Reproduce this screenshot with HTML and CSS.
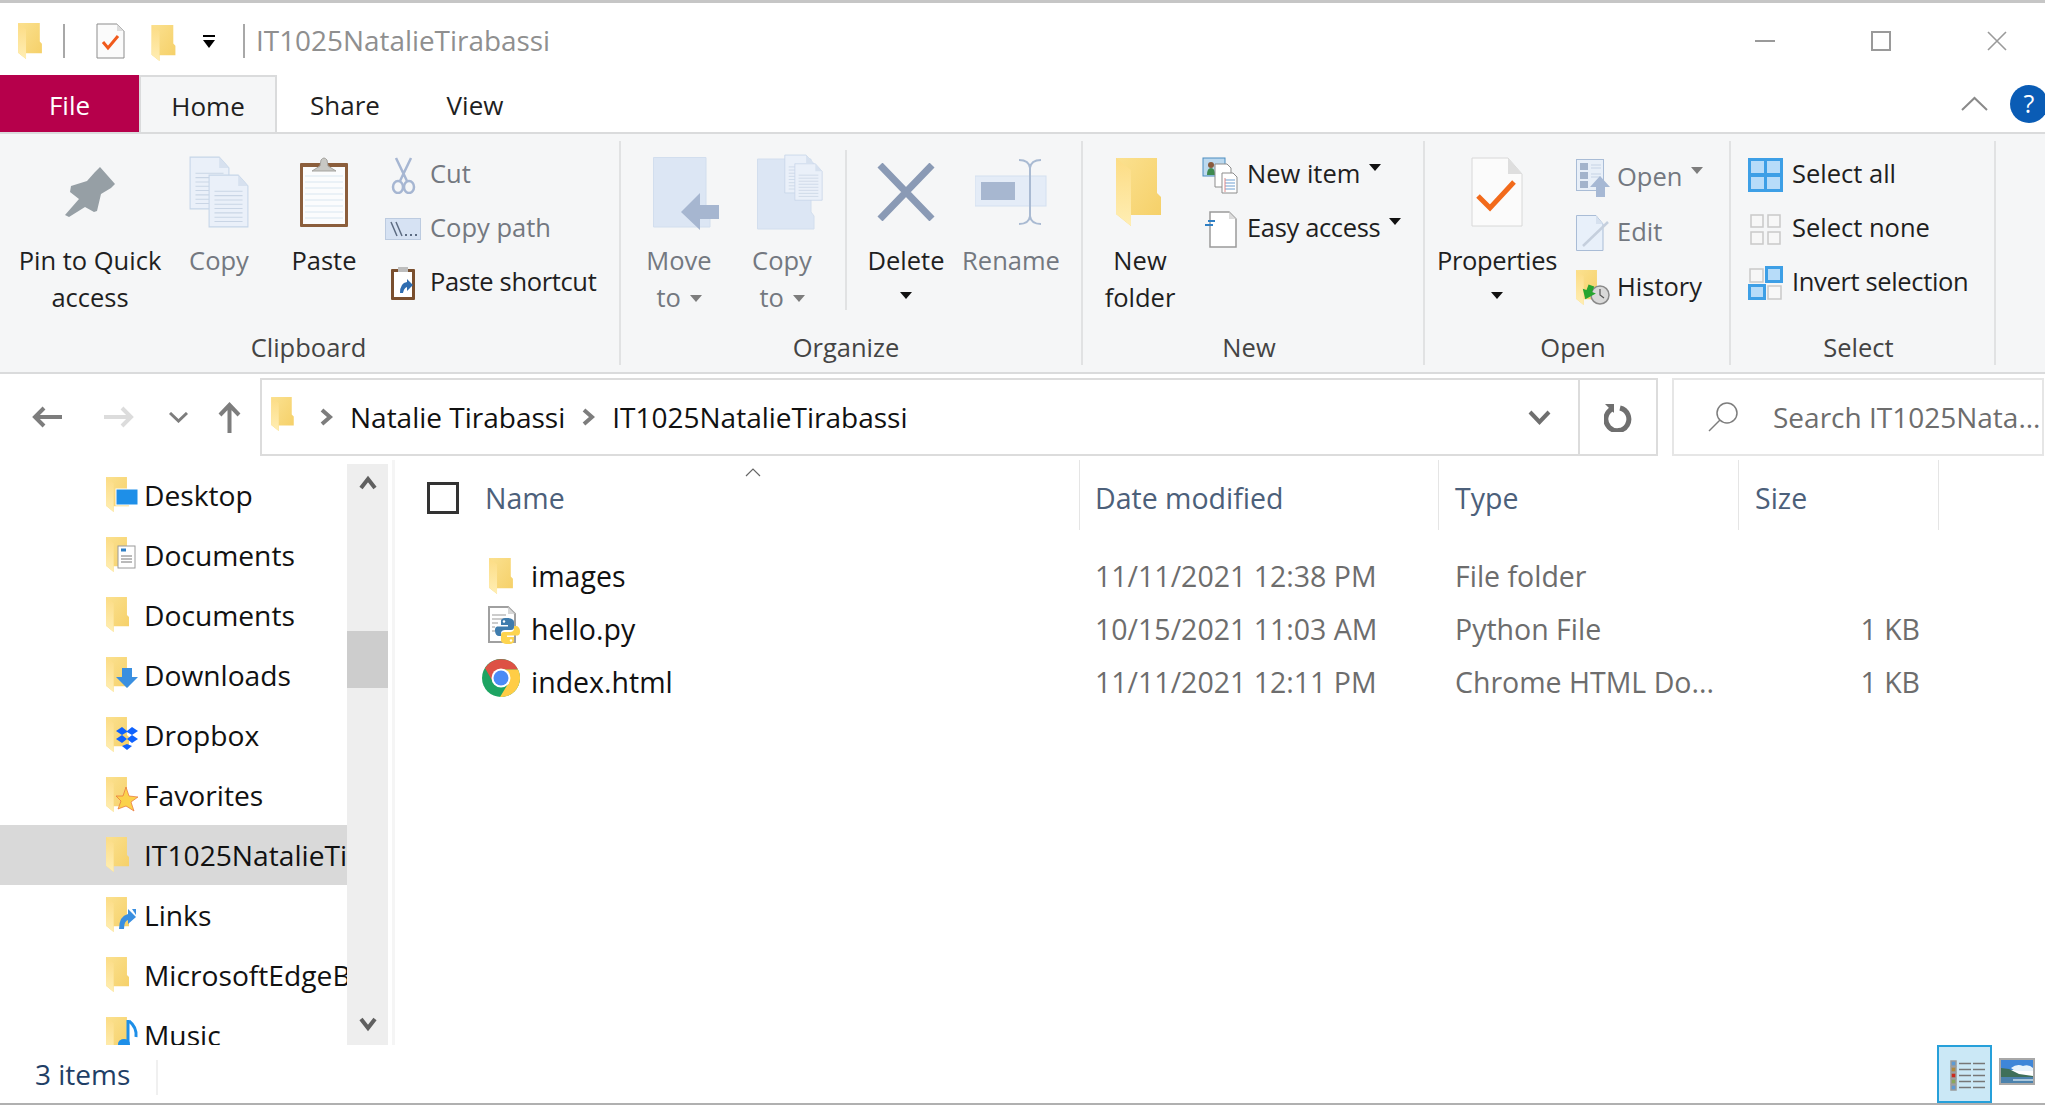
FILE: index.html
```html
<!DOCTYPE html>
<html lang="en">
<head>
  <meta charset="UTF-8">
  <meta name="viewport" content="width=device-width, initial-scale=1.0">
  <title>IT1025NatalieTirabassi</title>
  <link rel="stylesheet" href="styles.css">
</head>
<body>
  <!-- shared icon shapes -->
  <svg class="sprite" xmlns="http://www.w3.org/2000/svg">
    <defs>
      <linearGradient id="folderBack" x1="0" y1="0" x2="1" y2="1">
        <stop offset="0" stop-color="#fbe190"/>
        <stop offset="1" stop-color="#f5cf66"/>
      </linearGradient>
      <linearGradient id="folderFront" x1="0" y1="0" x2="0" y2="1">
        <stop offset="0" stop-color="#fcdc84"/>
        <stop offset="1" stop-color="#ffeeb4"/>
      </linearGradient>
      <symbol id="folder" viewBox="0 0 45 68">
        <path d="M0 0H41V35L45 39V57H15V68L0 56Z" fill="url(#folderBack)"/>
        <path d="M0 0L15 12V68L0 56Z" fill="url(#folderFront)"/>
      </symbol>
      <symbol id="page" viewBox="0 0 38 50">
        <path d="M1 1H28L37 11V49H1Z" fill="#eaf0f9" stroke="#c6d5e8"/>
        <path d="M28 1V11H37Z" fill="#d7e1ef"/>
        <path d="M6 16H32M6 20H32M6 24H32M6 28H32M6 32H32M6 36H32M6 40H32M6 44H32" stroke="#c9d5e5"/>
      </symbol>
    </defs>
  </svg>

  <!-- title bar -->
  <header class="titlebar">
    <svg class="qa-folder" width="24" height="36"><use href="#folder"/></svg>
    <span class="qa-sep"></span>
    <svg class="qa-check" width="29" height="36" viewBox="0 0 29 36">
      <path d="M1 1H21L28 8V35H1Z" fill="#fbfbfb" stroke="#8d8d8d"/>
      <path d="M21 1V8H28Z" fill="#dcdcdc"/>
      <path d="M7 19L12 25L22 13" fill="none" stroke="#f05a1c" stroke-width="3"/>
    </svg>
    <svg class="qa-folder2" width="25" height="36"><use href="#folder"/></svg>
    <svg class="qa-drop" width="14" height="14" viewBox="0 0 14 14">
      <path d="M1 0H13V2H1ZM1 5H13L7 13Z" fill="#000"/>
    </svg>
    <span class="qa-sep qa-sep-last"></span>
    <span class="window-title">IT1025NatalieTirabassi</span>
    <div class="window-controls">
      <svg width="20" height="20" viewBox="0 0 20 20"><path d="M0 10H20" stroke="#9a9a9a" stroke-width="2"/></svg>
      <svg width="20" height="20" viewBox="0 0 20 20"><path d="M1 1H19V19H1Z" fill="none" stroke="#9a9a9a" stroke-width="2"/></svg>
      <svg width="20" height="20" viewBox="0 0 20 20"><path d="M1 1L19 19M19 1L1 19" stroke="#9a9a9a" stroke-width="1.6"/></svg>
    </div>
  </header>

  <!-- ribbon tabs -->
  <nav class="tabs">
    <div class="tab tab-file">File</div>
    <div class="tab tab-home">Home</div>
    <div class="tab tab-share">Share</div>
    <div class="tab tab-view">View</div>
    <svg class="tabs-chevron" width="27" height="15" viewBox="0 0 27 15"><path d="M1 14L13.500 2L26 14" fill="none" stroke="#8a8a8a" stroke-width="2"/></svg>
    <div class="help">?</div>
  </nav>

  <!-- ribbon -->
  <section class="ribbon">
    <div class="group group-clipboard">
      <div class="group-body">
        <div class="big big-pin">
          <div class="big-icon">
            <svg width="50" height="50" viewBox="0 0 50 50"><path d="M35 0L50 17L46 21L36 27L32 44L29 45L20 40L4 50L0 48L14 32L5 25L6 19L22 14L30 5Z" fill="#969fa5"/></svg>
          </div>
          <span>Pin to Quick</span><span>access</span>
        </div>
        <div class="big big-copy off">
          <div class="big-icon">
            <svg width="60" height="72" viewBox="0 0 60 72">
              <use href="#page" x="0" y="0" width="41" height="54"/>
              <use href="#page" x="19" y="18" width="41" height="54"/>
            </svg>
          </div>
          <span>Copy</span>
        </div>
        <div class="big big-paste">
          <div class="big-icon">
            <svg width="50" height="72" viewBox="0 0 50 72">
              <rect x="1" y="7" width="48" height="64" rx="1" fill="#8b5e3c"/>
              <rect x="4" y="11" width="42" height="57" fill="#fbfcfd"/>
              <path d="M6 20H44M6 26H44M6 32H44M6 38H44M6 44H44M6 50H44M6 56H44M6 62H44" stroke="#d9e6f0"/>
              <path d="M13 15L21 10L22 4Q25 0 28 4L29 10L37 15Z" fill="#c8c8c4" stroke="#a5a39f"/>
            </svg>
          </div>
          <span>Paste</span>
        </div>
        <div class="smalls">
          <div class="small off">
            <div class="small-icon">
              <svg width="25" height="37" viewBox="0 0 25 37" fill="none" stroke="#a6b6d2" stroke-width="2.500">
                <path d="M5 1L16 24M20 1L9 24"/>
                <ellipse cx="7" cy="30" rx="5" ry="6"/><ellipse cx="18" cy="30" rx="5" ry="6"/>
              </svg>
            </div>
            <span>Cut</span>
          </div>
          <div class="small off">
            <div class="small-icon">
              <svg width="36" height="22" viewBox="0 0 36 22">
                <rect x=".5" y=".5" width="35" height="21" fill="#d6e2f3" stroke="#bccbe0"/>
                <path d="M6 4L12 18M11 4L17 18" stroke="#5d6c82" stroke-width="1.500"/>
                <path d="M20 17H22M25 17H27M30 17H32" stroke="#5d6c82" stroke-width="2"/>
              </svg>
            </div>
            <span>Copy path</span>
          </div>
          <div class="small">
            <div class="small-icon">
              <svg width="26" height="36" viewBox="0 0 26 36">
                <rect x="1" y="4" width="24" height="31" rx="1" fill="#7a4f2e"/>
                <rect x="4" y="7" width="18" height="25" fill="#fff"/>
                <path d="M8 2H18V7H8Z" fill="#bdbdbd"/>
                <path d="M10 28Q10 18 17 17V14L23 20L17 26V22Q14 23 13 28Z" fill="#2e6cb0"/>
              </svg>
            </div>
            <span class="tight">Paste shortcut</span>
          </div>
        </div>
      </div>
      <div class="group-label">Clipboard</div>
    </div>

    <div class="group group-organize">
      <div class="group-body">
        <div class="big big-move off">
          <div class="big-icon">
            <svg class="icon-right" width="68" height="76" viewBox="0 0 68 76">
              <path d="M.5 .5H53V57L57 61V70H.5Z" fill="#dce6f4" stroke="#d2deee"/>
              <path d="M28 55L47 36V48H66V62H47V73Z" fill="#a6b6d0"/>
            </svg>
          </div>
          <span>Move</span><span>to <i class="caret caret-off"></i></span>
        </div>
        <div class="big big-copyto off">
          <div class="big-icon">
            <svg class="icon-right" width="66" height="76" viewBox="0 0 66 76">
              <path d="M.5 5H54V58L57 62V75H.5Z" fill="#dce6f4" stroke="#d2deee"/>
              <use href="#page" x="27" y="0" width="30" height="40"/>
              <use href="#page" x="37" y="9" width="29" height="38"/>
            </svg>
          </div>
          <span>Copy</span><span>to <i class="caret caret-off"></i></span>
        </div>
        <span class="group-sep"></span>
        <div class="big big-delete">
          <div class="big-icon">
            <svg width="58" height="58" viewBox="0 0 58 58"><path d="M3 2L55 56M55 2L3 56" stroke="#8a9ab5" stroke-width="7"/></svg>
          </div>
          <span>Delete</span><i class="caret caret-line"></i>
        </div>
        <div class="big big-rename off">
          <div class="big-icon">
            <svg width="72" height="66" viewBox="0 0 72 66">
              <rect x="0" y="17" width="71" height="30" fill="#e4ecf7" stroke="#d4e0f0"/>
              <rect x="6" y="23" width="34" height="18" fill="#a7b7d0"/>
              <path d="M44 1Q54 1 55 9V57Q54 65 44 65M66 1Q56 1 55 9M55 57Q56 65 66 65" fill="none" stroke="#a9bad2" stroke-width="2"/>
            </svg>
          </div>
          <span>Rename</span>
        </div>
      </div>
      <div class="group-label">Organize</div>
    </div>

    <div class="group group-new">
      <div class="group-body">
        <div class="big big-newfolder">
          <div class="big-icon">
            <svg class="new-folder-icon" width="45" height="68"><use href="#folder"/></svg>
          </div>
          <span>New</span><span>folder</span>
        </div>
        <div class="smalls">
          <div class="small">
            <div class="small-icon">
              <svg width="36" height="37" viewBox="0 0 36 37">
                <rect x="1" y="1" width="22" height="18" fill="#bcd9ef" stroke="#4a8cc0"/>
                <circle cx="9" cy="8" r="3" fill="#8a5a3c"/><path d="M5 18Q5 11 9 11Q13 11 13 18Z" fill="#3f8a4f"/>
                <path d="M13 7H25L29 11V30H13Z" fill="#fff" stroke="#8d8d8d"/>
                <path d="M20 16H31L35 20V36H20Z" fill="#fff" stroke="#8d8d8d"/>
                <path d="M23 23H33M23 26H33M23 29H33M23 32H33" stroke="#6f9fd0"/>
                <path d="M23 21V35" stroke="#e08b8b"/>
              </svg>
            </div>
            <span>New item <i class="caret caret-up"></i></span>
          </div>
          <div class="small">
            <div class="small-icon">
              <svg width="33" height="37" viewBox="0 0 33 37">
                <path d="M6 1H25L32 8V36H6Z" fill="#fff" stroke="#9a9a9a" stroke-width="1.500"/>
                <path d="M25 1V8H32Z" fill="#dcdcdc"/>
                <path d="M4 10H11M1 14H9" stroke="#2f7fc4" stroke-width="2"/>
              </svg>
            </div>
            <span class="tight">Easy access <i class="caret caret-up"></i></span>
          </div>
        </div>
      </div>
      <div class="group-label">New</div>
    </div>

    <div class="group group-open">
      <div class="group-body">
        <div class="big big-properties">
          <div class="big-icon">
            <svg width="52" height="70" viewBox="0 0 52 70">
              <path d="M1 1H37L51 17V69H1Z" fill="#fbfbfb" stroke="#d8d8d8"/>
              <path d="M37 1V17H51Z" fill="#dedede"/>
              <path d="M7 39L19 51L43 25" fill="none" stroke="#f26a1b" stroke-width="5"/>
            </svg>
          </div>
          <span class="tight">Properties</span><i class="caret caret-line"></i>
        </div>
        <div class="smalls">
          <div class="small off">
            <div class="small-icon">
              <svg width="34" height="38" viewBox="0 0 34 38">
                <rect x=".5" y=".5" width="27" height="31" fill="#e8eff8" stroke="#a9bcd6"/>
                <path d="M4 4H12V11H4ZM4 13H12V20H4ZM4 22H12V29H4Z" fill="#a3b3cb"/>
                <path d="M15 6H25M15 9H25M15 15H25M15 18H25" stroke="#c6d3e5"/>
                <path d="M24 17L34 28H29V38H20V28H14Z" fill="#a6b8d4"/>
              </svg>
            </div>
            <span>Open <i class="caret caret-off caret-up"></i></span>
          </div>
          <div class="small off">
            <div class="small-icon">
              <svg width="34" height="36" viewBox="0 0 34 36">
                <path d="M.5 .5H20L27 9V35.500H.5Z" fill="#e8f0fa" stroke="#a9bcd6"/>
                <path d="M20 .5V9H27Z" fill="#d6e1ef"/>
                <path d="M7 31L32 7" stroke="#c5cfdd" stroke-width="2.500"/>
              </svg>
            </div>
            <span>Edit</span>
          </div>
          <div class="small">
            <div class="small-icon">
              <svg width="34" height="36" viewBox="0 0 34 36">
                <use href="#folder" x="0" y="0" width="23" height="35"/>
                <circle cx="24" cy="25" r="9" fill="#d9d9d9" stroke="#8a8a8a" stroke-width="1.500"/>
                <path d="M24 19V25L28 28" fill="none" stroke="#555" stroke-width="1.200"/>
                <path d="M16 15V21H20L12 30L6 21H10V15Z" fill="#27a52f" transform="rotate(20 13 22)"/>
              </svg>
            </div>
            <span>History</span>
          </div>
        </div>
      </div>
      <div class="group-label">Open</div>
    </div>

    <div class="group group-select">
      <div class="group-body">
        <div class="smalls">
          <div class="small">
            <div class="small-icon">
              <svg width="35" height="34" viewBox="0 0 35 34">
                <rect width="35" height="34" fill="#3d9fe6"/>
                <path d="M3 3H16V15H3ZM19 3H32V15H19ZM3 19H16V31H3ZM19 19H32V31H19Z" fill="#b7dcf9"/>
              </svg>
            </div>
            <span>Select all</span>
          </div>
          <div class="small">
            <div class="small-icon">
              <svg width="31" height="31" viewBox="0 0 31 31" fill="#f7f7f7" stroke="#c9c9c9" stroke-width="1.500">
                <rect x="1" y="1" width="12" height="12"/><rect x="18" y="1" width="12" height="12"/>
                <rect x="1" y="18" width="12" height="12"/><rect x="18" y="18" width="12" height="12"/>
              </svg>
            </div>
            <span>Select none</span>
          </div>
          <div class="small">
            <div class="small-icon">
              <svg width="35" height="34" viewBox="0 0 35 34">
                <rect x="2" y="3" width="13" height="13" fill="#f7f7f7" stroke="#c9c9c9" stroke-width="1.500"/>
                <rect x="18.500" y="1.500" width="15" height="14" fill="#b7dcf9" stroke="#3d9fe6" stroke-width="3"/>
                <rect x="1.500" y="19.500" width="15" height="13" fill="#b7dcf9" stroke="#3d9fe6" stroke-width="3"/>
                <rect x="20" y="20" width="13" height="13" fill="#f7f7f7" stroke="#c9c9c9" stroke-width="1.500"/>
              </svg>
            </div>
            <span class="tight">Invert selection</span>
          </div>
        </div>
      </div>
      <div class="group-label">Select</div>
    </div>
  </section>

  <!-- address bar -->
  <div class="addressrow">
    <div class="nav-buttons">
      <svg class="nav-back" width="31" height="22" viewBox="0 0 31 22" fill="none" stroke="#7d7d7d" stroke-width="4"><path d="M31 11H4M13 2L4 11L13 20"/></svg>
      <svg class="nav-forward" width="31" height="22" viewBox="0 0 31 22" fill="none" stroke="#dcdcdc" stroke-width="4"><path d="M0 11H27M18 2L27 11L18 20"/></svg>
      <svg class="nav-recent" width="19" height="11" viewBox="0 0 19 11" fill="none" stroke="#7d7d7d" stroke-width="3"><path d="M1 1L9.500 9L18 1"/></svg>
      <svg class="nav-up" width="23" height="31" viewBox="0 0 23 31" fill="none" stroke="#7d7d7d" stroke-width="4"><path d="M11.500 31V4M2 13L11.500 3L21 13"/></svg>
    </div>
    <div class="address">
      <svg class="address-folder" width="23" height="34"><use href="#folder"/></svg>
      <svg class="crumb-arrow" width="13" height="18" viewBox="0 0 13 18" fill="none" stroke="#7d7d7d" stroke-width="4"><path d="M2 2L10 9L2 16"/></svg>
      <span class="crumb">Natalie Tirabassi</span>
      <svg class="crumb-arrow" width="13" height="18" viewBox="0 0 13 18" fill="none" stroke="#7d7d7d" stroke-width="4"><path d="M2 2L10 9L2 16"/></svg>
      <span class="crumb">IT1025NatalieTirabassi</span>
      <svg class="address-drop" width="23" height="16" viewBox="0 0 23 16" fill="none" stroke="#6f6f6f" stroke-width="4"><path d="M2 3L11.500 13L21 3"/></svg>
      <div class="refresh">
        <svg width="29" height="29" viewBox="0 0 29 29" fill="none" stroke="#6f6f6f" stroke-width="5"><path d="M8 6A11.500 11.500 0 1 0 16 5"/><path d="M1 1H10V10Z" fill="#6f6f6f" stroke="none"/></svg>
      </div>
    </div>
    <div class="search">
      <svg width="30" height="30" viewBox="0 0 30 30" fill="none" stroke="#7d7d7d" stroke-width="1.500"><circle cx="19" cy="11" r="10"/><path d="M12 18L1 29"/></svg>
      <span>Search IT1025Nata...</span>
    </div>
  </div>

  <!-- sidebar and file list -->
  <main class="main">
    <aside class="sidebar">
      <div class="tree">
        <div class="tree-row">
          <svg width="36" height="36" viewBox="0 0 36 36"><use href="#folder" width="23" height="35"/>
            <rect x="10" y="12" width="22" height="16" fill="#1e8fe8" stroke="#fff"/></svg>
          Desktop
        </div>
        <div class="tree-row">
          <svg width="36" height="36" viewBox="0 0 36 36"><use href="#folder" width="23" height="35"/>
            <rect x="12" y="9" width="17" height="22" fill="#fff" stroke="#9a9a9a"/>
            <path d="M15 13H20" stroke="#2f7fc4" stroke-width="3"/><path d="M15 19H26M15 22H26M15 25H26" stroke="#777"/></svg>
          Documents
        </div>
        <div class="tree-row">
          <svg width="36" height="36" viewBox="0 0 36 36"><use href="#folder" width="23" height="35"/></svg>
          Documents
        </div>
        <div class="tree-row">
          <svg width="36" height="36" viewBox="0 0 36 36"><use href="#folder" width="23" height="35"/>
            <path d="M16 11H26V20H32L21 31L10 20H16Z" fill="#3a8fe0"/></svg>
          Downloads
        </div>
        <div class="tree-row">
          <svg width="36" height="36" viewBox="0 0 36 36"><use href="#folder" width="23" height="35"/>
            <path d="M16 12L10 16L16 20L10 24L16 28L21 24L26 28L32 24L26 20L32 16L26 12L21 16ZM21 17L26 20L21 24L16 20ZM21 29L16 31L21 35L26 31Z" fill="#0f62fe" transform="translate(0 -2)"/></svg>
          Dropbox
        </div>
        <div class="tree-row">
          <svg width="36" height="36" viewBox="0 0 36 36"><use href="#folder" width="23" height="35"/>
            <path d="M20 10L23 19L32 20L25 25L28 34L20 29L12 32L15 24L10 19L17 19Z" fill="#fbd24b" stroke="#e8703a" stroke-width=".7"/></svg>
          Favorites
        </div>
        <div class="tree-row tree-row-active">
          <svg width="36" height="36" viewBox="0 0 36 36"><use href="#folder" width="23" height="35"/></svg>
          IT1025NatalieTirabassi
        </div>
        <div class="tree-row">
          <svg width="36" height="36" viewBox="0 0 36 36"><use href="#folder" width="23" height="35"/>
            <path d="M13 32Q13 19 22 17V12L30 20L22 27V23Q18 24 18 32Z" fill="#3a8fe0"/><path d="M26 12H30V18Z" fill="#3a8fe0"/></svg>
          Links
        </div>
        <div class="tree-row">
          <svg width="36" height="36" viewBox="0 0 36 36"><use href="#folder" width="23" height="35"/></svg>
          MicrosoftEdgeBackups
        </div>
        <div class="tree-row">
          <svg width="36" height="36" viewBox="0 0 36 36"><use href="#folder" width="23" height="35"/>
            <path d="M22 3V26" stroke="#1e8fe8" stroke-width="3" fill="none"/><path d="M23 4Q31 10 30 20" stroke="#1e8fe8" stroke-width="3" fill="none"/><ellipse cx="18" cy="27" rx="6" ry="5" fill="#1e8fe8"/></svg>
          Music
        </div>
      </div>
      <div class="scrollbar">
        <svg width="18" height="15" viewBox="0 0 18 15" fill="none" stroke="#606060" stroke-width="4"><path d="M2 13L9 4L16 13"/></svg>
        <div class="scroll-thumb"></div>
        <svg width="18" height="15" viewBox="0 0 18 15" fill="none" stroke="#606060" stroke-width="4"><path d="M2 2L9 11L16 2"/></svg>
      </div>
    </aside>

    <section class="list">
      <div class="list-head">
        <div class="col col-name">
          <span class="check"></span>Name
          <svg class="sort" width="16" height="9" viewBox="0 0 16 9" fill="none" stroke="#666" stroke-width="1.200"><path d="M1 8L8 1L15 8"/></svg>
        </div>
        <div class="col col-date">Date modified</div>
        <div class="col col-type">Type</div>
        <div class="col col-size">Size</div>
      </div>

      <div class="file">
        <div class="file-name"><span class="file-icon"><svg width="24" height="36"><use href="#folder"/></svg></span>images</div>
        <div class="file-date">11/11/2021 12:38 PM</div>
        <div class="file-type">File folder</div>
        <div class="file-size"></div>
      </div>
      <div class="file">
        <div class="file-name">
          <span class="file-icon file-icon-up">
            <svg width="38" height="40" viewBox="0 0 38 40">
              <path d="M7 2H26L33 9V37H7Z" fill="#fff" stroke="#a0a0a0" stroke-width="2"/>
              <path d="M26 2V9H33Z" fill="#d8d8d8"/>
              <path d="M10 10H24M10 14H26M10 18H16M10 22H13M10 26H13" stroke="#bcbcbc" stroke-width="1.500"/>
              <g>
                <path d="M25 13C19 13 19 15 19 17V20H26V21.500H16C13 21.500 13 24 13 26C13 29 15 31 17 31H19V28C19 26 21 25 23 25H29C31 25 32 24 32 22V17C32 15 30 13 25 13Z" fill="#3f7cad"/>
                <circle cx="22" cy="16.500" r="1.200" fill="#fff"/>
              </g>
              <g transform="rotate(180 25.500 26)">
                <path d="M25 13C19 13 19 15 19 17V20H26V21.500H16C13 21.500 13 24 13 26C13 29 15 31 17 31H19V28C19 26 21 25 23 25H29C31 25 32 24 32 22V17C32 15 30 13 25 13Z" fill="#fdd44f"/>
                <circle cx="22" cy="16.500" r="1.200" fill="#fff"/>
              </g>
            </svg>
          </span>hello.py
        </div>
        <div class="file-date">10/15/2021 11:03 AM</div>
        <div class="file-type">Python File</div>
        <div class="file-size">1 KB</div>
      </div>
      <div class="file">
        <div class="file-name">
          <span class="file-icon file-icon-up">
            <svg width="38" height="38" viewBox="0 0 38 38">
              <circle cx="19" cy="19" r="19" fill="#1da462"/>
              <path d="M3 9A19 19 0 0 1 36 10.500H19L11.500 24Z" fill="#dd5144"/>
              <path d="M36 10.500A19 19 0 0 1 18 38L26.500 24L19 10.500Z" fill="#ffcd46"/>
              <circle cx="19" cy="19" r="9.500" fill="#fff"/>
              <circle cx="19" cy="19" r="7.500" fill="#4c8bf5"/>
            </svg>
          </span>index.html
        </div>
        <div class="file-date">11/11/2021 12:11 PM</div>
        <div class="file-type">Chrome HTML Do...</div>
        <div class="file-size">1 KB</div>
      </div>
    </section>
  </main>

  <!-- status bar -->
  <footer class="statusbar">
    <span class="status-count">3 items</span>
    <span class="status-sep"></span>
    <div class="view-details">
      <svg width="35" height="31" viewBox="0 0 35 31">
        <g stroke="#9a9a9a" stroke-width="1.500">
          <rect x="1" y="1" width="5" height="5" fill="#5c9bd5"/><rect x="1" y="7" width="5" height="5" fill="#b08a3c"/><rect x="1" y="13" width="5" height="5" fill="#cc2a1e"/><rect x="1" y="19" width="5" height="5" fill="#8aa85a"/><rect x="1" y="25" width="5" height="5" fill="#5c9bd5"/>
        </g>
        <path d="M9 3.500H21M23 3.500H35M9 9.500H21M23 9.500H35M9 15.500H21M23 15.500H35M9 21.500H21M23 21.500H35M9 27.500H21M23 27.500H35" stroke="#777" stroke-width="1.500"/>
      </svg>
    </div>
    <div class="view-thumbs">
      <svg width="36" height="27" viewBox="0 0 36 27">
        <rect x="1" y="1" width="34" height="25" fill="#fff" stroke="#a8a8a8" stroke-width="2"/>
        <rect x="2" y="2" width="32" height="10" fill="#3f86d8"/>
        <path d="M12 10Q18 5 24 8Q30 6 34 10V13H16Z" fill="#e8f3fb"/>
        <path d="M2 10L10 11L20 16L34 18V20H2Z" fill="#3f6f58"/>
        <path d="M2 19H34V25H2Z" fill="#4c82ad"/>
        <path d="M14 21H34V23H14Z" fill="#a9c7dc"/>
      </svg>
    </div>
  </footer>
</body>
</html>
```

FILE: styles.css
```css
/* page */
* {
  box-sizing: border-box;
}
html, body {
  margin: 0;
  height: 1105px;
  overflow: hidden;
}
body {
  display: flex;
  flex-direction: column;
  font-family: 'Open Sans', 'Noto Sans', sans-serif;
  background: #fff;
  color: #1f1f1f;
  border-top: 3px solid #c6c6c6;
}
svg {
  display: block;
  flex: none;
}
.sprite {
  width: 0;
  height: 0;
}

/* title bar */
.titlebar {
  flex: none;
  height: 72px;
  padding-top: 4px;
  display: flex;
  align-items: center;
}
.qa-folder {
  margin-left: 18px;
}
.qa-sep {
  width: 2px;
  height: 34px;
  background: #a8a8a8;
  margin-left: 21px;
}
.qa-check {
  margin-left: 31px;
}
.qa-folder2 {
  margin-left: 26px;
  margin-top: 4px;
}
.qa-drop {
  margin-left: 26px;
  margin-top: 2px;
}
.qa-sep-last {
  margin-left: 27px;
}
.window-title {
  margin-left: 11px;
  margin-top: -2px;
  font-size: 27.9px;
  color: #8f8f8f;
}
.window-controls {
  margin-left: auto;
  display: flex;
  gap: 96px;
  margin-right: 38px;
}

/* tabs */
.tabs {
  flex: none;
  height: 59px;
  display: flex;
  align-items: stretch;
  position: relative;
  overflow: hidden;
  border-bottom: 2px solid #dadbdc;
  font-size: 26px;
}
.tab {
  display: flex;
  align-items: center;
  justify-content: center;
  padding-top: 2px;
}
.tab-file {
  width: 139px;
  height: 57px;
  background: #b6004b;
  color: #fff;
}
.tab-home {
  width: 138px;
  height: 59px;
  background: #f5f6f7;
  border: 2px solid #dadbdc;
  border-bottom: 0;
  padding-top: 0;
}
.tab-share {
  width: 136px;
}
.tab-view {
  width: 124px;
}
.tabs-chevron {
  margin-left: auto;
  align-self: center;
}
.help {
  width: 38px;
  height: 38px;
  border-radius: 50%;
  background: #0a5cb5;
  color: #fff;
  align-self: center;
  margin: 0 -3px 0 22px;
  flex: none;
  text-align: center;
  line-height: 36px;
  font-size: 25px;
}

/* ribbon */
.ribbon {
  flex: none;
  height: 240px;
  display: flex;
  padding: 7px 0;
  background: #f5f6f7;
  border-bottom: 2px solid #dadbdc;
  font-size: 25.5px;
  line-height: 37px;
}
.group {
  display: flex;
  flex-direction: column;
  border-right: 2px solid #e1e2e3;
}
.group-clipboard { width: 621px; }
.group-organize { width: 462px; }
.group-new { width: 342px; }
.group-open { width: 306px; }
.group-select { width: 265px; }

.group-body {
  flex: 1;
  display: flex;
}
.group-label {
  height: 36px;
  margin-top: -1px;
  padding-right: 8px;
  text-align: center;
  color: #444;
}
.group-clipboard .group-label { padding-right: 2px; }
.group-organize .group-label { padding-right: 10px; }

.group-clipboard .group-body { padding-left: 10px; }
.group-organize .group-body { padding-left: 9px; }
.group-new .group-body { padding-left: 7px; }
.group-open .group-body { padding-left: 7px; }
.group-select .group-body { padding-left: 11px; }

.group-sep {
  width: 2px;
  height: 160px;
  margin: 9px 14px 0 13px;
  background: #e1e2e3;
}

/* large ribbon buttons */
.big {
  display: flex;
  flex-direction: column;
  align-items: center;
}
.big-icon {
  height: 101px;
  padding-top: 1px;
  display: flex;
  align-items: center;
  justify-content: center;
}
.icon-right {
  margin-left: 15px;
}
.big-move .icon-right {
  margin-top: 6px;
}
.new-folder-icon {
  margin-right: 3px;
}
.big-pin { width: 160px; }
.big-copy { width: 98px; }
.big-paste { width: 112px; }
.big-move { width: 98px; }
.big-copyto { width: 100px; margin-left: 4px; }
.big-delete { width: 90px; }
.big-rename { width: 120px; }
.big-newfolder { width: 100px; }
.big-properties { width: 130px; }

/* small ribbon rows */
.smalls {
  display: flex;
  flex-direction: column;
  padding-top: 7px;
}
.small {
  height: 54px;
  display: flex;
  align-items: center;
  white-space: nowrap;
}
.small > span {
  padding-bottom: 4px;
}
.small-icon {
  width: 46px;
  margin-right: 4px;
  display: flex;
  justify-content: center;
}
.tight {
  letter-spacing: -.35px;
}
.group-new .smalls { margin-left: 7px; }
.group-open .smalls {
  padding-top: 9px;
}
.group-open .small {
  height: 55px;
}
.group-open .small > span {
  padding-bottom: 2px;
}
.group-open .small-icon {
  margin-right: 1px;
  margin-left: 8px;
}

.off {
  color: #737880;
}

/* dropdown arrows */
.caret {
  display: inline-block;
  width: 0;
  height: 0;
  border-style: solid;
  border-width: 7px 6px 0;
  border-color: #111 transparent transparent;
  vertical-align: 5px;
  margin-left: 2px;
}
.caret-off {
  border-top-color: #7d7d7d;
}
.caret-up {
  vertical-align: 12px;
}
.caret-line {
  margin: 13px 0 0;
}

/* address row */
.addressrow {
  flex: none;
  height: 86px;
  padding-top: 4px;
  display: flex;
}
.nav-buttons {
  width: 260px;
  height: 78px;
  display: flex;
  align-items: center;
}
.nav-back { margin-left: 31px; }
.nav-forward { margin-left: 42px; }
.nav-recent { margin-left: 34px; }
.nav-up { margin-left: 30px; }

.address {
  width: 1398px;
  height: 78px;
  display: flex;
  align-items: center;
  border: 2px solid #dcdcdc;
  font-size: 28px;
}
.address-folder {
  margin-left: 9px;
  margin-top: -6px;
}
.crumb-arrow {
  margin-left: 26px;
}
.crumb {
  margin-left: 17px;
  color: #111;
}
.crumb + .crumb-arrow {
  margin-left: 17px;
}
.address-drop {
  margin-left: auto;
  margin-right: 27px;
}
.refresh {
  width: 78px;
  height: 100%;
  display: flex;
  align-items: center;
  justify-content: center;
  border-left: 2px solid #dcdcdc;
}
.search {
  width: 372px;
  height: 78px;
  margin-left: 14px;
  display: flex;
  align-items: center;
  padding-left: 34px;
  border: 2px solid #e6e6e6;
  font-size: 28px;
  color: #6d6d6d;
  white-space: nowrap;
  overflow: hidden;
}
.search span {
  margin-left: 35px;
}

/* sidebar */
.main {
  flex: none;
  height: 585px;
  display: flex;
}
.sidebar {
  flex: none;
  width: 395px;
  display: flex;
  border-right: 3px solid #f5f5f5;
  padding-right: 4px;
}
.tree {
  width: 347px;
  padding-top: 5px;
  overflow: hidden;
  font-size: 28.2px;
}
.tree-row {
  height: 60px;
  display: flex;
  align-items: center;
  gap: 2px;
  padding-left: 106px;
  white-space: nowrap;
  color: #111;
}
.tree-row-active {
  background: #d9d9d9;
}
.scrollbar {
  width: 41px;
  margin-top: 4px;
  background: #eeeeee;
  display: flex;
  flex-direction: column;
  align-items: center;
  position: relative;
}
.scrollbar svg:first-child {
  margin-top: 11px;
}
.scrollbar svg:last-child {
  margin-top: auto;
  margin-bottom: 13px;
}
.scroll-thumb {
  position: absolute;
  left: 0;
  top: 167px;
  width: 41px;
  height: 57px;
  background: #cdcdcd;
}

/* file list */
.list {
  flex: 1;
  font-size: 28.5px;
}
.list-head {
  height: 70px;
  margin-bottom: 19px;
  display: flex;
  color: #4c607a;
}
.col {
  display: flex;
  align-items: center;
  padding-left: 15px;
  border-right: 1px solid #e5e5e5;
  padding-top: 6px;
}
.col-name {
  width: 685px;
  padding-left: 32px;
  position: relative;
}
.col-date { width: 359px; }
.col-type { width: 300px; padding-left: 16px; }
.col-size { width: 200px; padding-left: 16px; }
.check {
  width: 32px;
  height: 32px;
  border: 3px solid #333;
  margin-right: 26px;
}
.sort {
  position: absolute;
  left: 350px;
  top: 8px;
}
.file {
  height: 53px;
  display: flex;
  align-items: center;
  color: #6d6d6d;
}
.file-name {
  width: 685px;
  padding-left: 87px;
  display: flex;
  align-items: center;
  color: #111;
}
.file-icon {
  width: 38px;
  margin-right: 11px;
  display: flex;
  justify-content: center;
}
.file-icon-up {
  margin-top: -7px;
}
.file-date {
  width: 359px;
  padding-left: 15px;
}
.file-type {
  width: 300px;
  padding-left: 16px;
}
.file-size {
  width: 181px;
  text-align: right;
}

/* status bar */
.statusbar {
  flex: none;
  height: 60px;
  display: flex;
  align-items: flex-start;
  border-bottom: 2px solid #b0b0b0;
  font-size: 28px;
  color: #1f3f66;
}
.status-count {
  margin-left: 35px;
  margin-top: 10px;
}
.status-sep {
  width: 2px;
  height: 35px;
  margin: 15px 0 0 26px;
  background: #f0f0f0;
}
.view-details {
  width: 55px;
  height: 58px;
  margin-left: auto;
  display: flex;
  align-items: flex-end;
  justify-content: center;
  padding: 0 0 10px 6px;
  background: #cbe8f6;
  border: 2px solid #26a0da;
}
.view-thumbs {
  margin: 13px 10px 0 7px;
}
```
